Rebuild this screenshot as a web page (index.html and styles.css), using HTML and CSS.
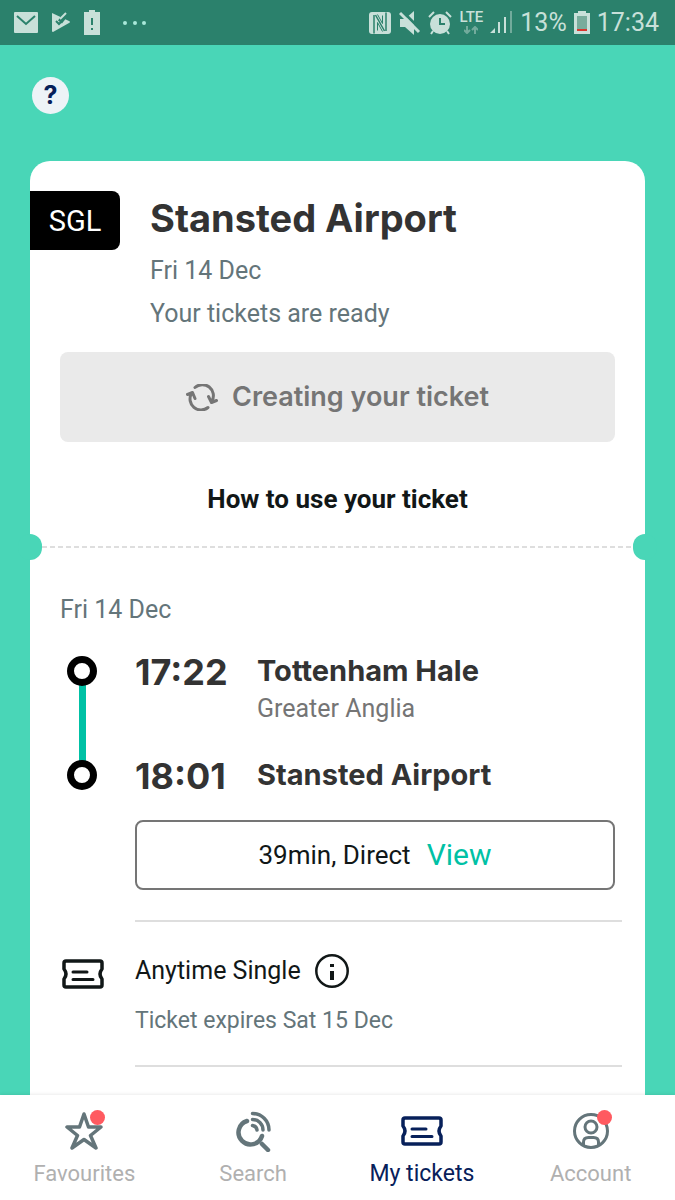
FILE: index.html
```html
<!doctype html>
<html lang="en">
<head>
	<meta charset="UTF-8">
	<meta name="viewport" content="width=device-width, initial-scale=1">
	<title>My tickets</title>
	<link rel="stylesheet" href="styles.css">
</head>
<body>
	<header class="status">
		<div class="status-left">
			<svg width="24" height="21" viewBox="0 0 24 21"><rect width="24" height="21" rx="1" fill="#c8e0d9"/><path d="M3 4l9 8 9-8" fill="none" stroke="#2b816c" stroke-width="2"/></svg>
			<svg width="20" height="21" viewBox="0 0 20 21"><path d="M1 1l17 8q2 1 0 2L2 20q-1 0-1-1z" fill="#c8e0d9"/><path d="M9 10l6-8" fill="none" stroke="#2b816c" stroke-width="5"/><path d="M5 9l3 3 5-5" fill="none" stroke="#2b816c" stroke-width="2"/><path d="M9 7l6-6" fill="none" stroke="#c8e0d9" stroke-width="2"/></svg>
			<svg width="16" height="25" viewBox="0 0 16 25"><path d="M0 2h5V0h6v2h5v23H0z" fill="#c8e0d9"/><path d="M8 8v7M8 18v2" stroke="#2b816c" stroke-width="2"/></svg>
			<svg class="more" width="24" height="4" viewBox="0 0 24 4" fill="#a9e8da"><circle cx="2" cy="2" r="2"/><circle cx="12" cy="2" r="2"/><circle cx="21" cy="2" r="2"/></svg>
		</div>
		<div class="status-right">
			<svg width="24" height="24" viewBox="0 0 24 24"><rect x="1" y="1" width="22" height="22" rx="3" fill="#c8e0d9"/><path d="M6 22.500V4M18 1.500V20M7.500 4l9 16" fill="none" stroke="#2b816c" stroke-width="1.500"/><path d="M9.500 19.500v-8l5 9M14.500 4.500v8l-5-9" fill="none" stroke="#2b816c" stroke-width="1"/></svg>
			<svg width="22" height="24" viewBox="0 0 22 24"><path d="M1 8h5l9-8v24l-9-8H1z" fill="#c8e0d9"/><path d="M3 0l19 19" stroke="#2b816c" stroke-width="3"/><path d="M1 2l19 19" stroke="#c8e0d9" stroke-width="3"/></svg>
			<svg width="24" height="24" viewBox="0 0 24 24"><circle cx="12" cy="13" r="10" fill="#c8e0d9"/><path d="M1 6l5-5M23 6l-5-5M5 20l-2 3M19 20l2 3" stroke="#c8e0d9" stroke-width="2"/><path d="M12 7v6h5" fill="none" stroke="#2b816c" stroke-width="2"/></svg>
			<div class="lte">LTE
				<svg width="14" height="8" viewBox="0 0 14 8" fill="none" stroke="#72ab9c" stroke-width="2"><path d="M3 0v7M0 4l3 3 3-3M11 8V1M8 4l3-3 3 3"/></svg>
			</div>
			<svg width="23" height="23" viewBox="0 0 23 23"><path d="M0 22h5v-5zM8 11h2v11H8zM14 6h2v16h-2z" fill="#c8e0d9"/><path d="M20 0h2v22h-2z" fill="#72ab9c"/></svg>
			<span>13%</span>
			<svg width="16" height="23" viewBox="0 0 16 23"><path d="M0 2h4V0h8v2h4v21H0z" fill="#c8e0d9"/><path d="M3 5h10v13H3z" fill="#78ac9c"/><path d="M3 18h10v2H3z" fill="#d8362e"/></svg>
			<span>17:34</span>
		</div>
	</header>

	<main>
		<button class="help" type="button" aria-label="Help">?</button>

		<article class="ticket">
			<section class="summary">
				<div class="summary-top">
					<span class="type">SGL</span>
					<div>
						<h1>Stansted Airport</h1>
						<p class="muted">Fri 14 Dec</p>
						<p class="muted">Your tickets are ready</p>
					</div>
				</div>
				<button class="creating" type="button">
					<svg width="32" height="27" viewBox="0 0 32 27" fill="none" stroke="#757575" stroke-width="3" stroke-linecap="round" stroke-linejoin="round"><path d="M9 3.500a11 11 0 0 1 17 13.500M22.500 12.500l3 6 5-2M22 23.500A11 11 0 0 1 5.500 9.500M1.500 10.500l5-2 2.500 6"/></svg>
					Creating your ticket
				</button>
				<a class="how" href="#">How to use your ticket</a>
			</section>
			<div class="tear"></div>

			<section class="journey">
				<p class="muted">Fri 14 Dec</p>
				<div class="stops">
					<div class="track"></div>
					<div class="stop">
						<time>17:22</time>
						<div>
							<h2>Tottenham Hale</h2>
							<p class="operator">Greater Anglia</p>
						</div>
					</div>
					<div class="stop">
						<time>18:01</time>
						<h2>Stansted Airport</h2>
					</div>
				</div>
				<button class="view" type="button">39min, Direct <span>View</span></button>
				<div class="fare">
					<svg class="fare-icon" width="42" height="30" viewBox="0 0 42 30" fill="none" stroke="#111717" stroke-width="3.500" stroke-linejoin="round" stroke-linecap="round"><path d="M4 2h34q2 0 2 2v6q-4 5 0 10v6q0 2-2 2H4q-2 0-2-2v-6q4-5 0-10V4q0-2 2-2z"/><path d="M11 13h14M11 20.500h20" stroke-width="3"/></svg>
					<div class="fare-text">
						<p class="fare-name">Anytime Single
							<button class="info" type="button" aria-label="Ticket information">
								<svg width="34" height="34" viewBox="0 0 34 34"><circle cx="17" cy="17" r="15.700" fill="none" stroke="#111717" stroke-width="2.500"/><path d="M15 17h4v9h-4zM15 10h4v3h-4z" fill="#111717"/></svg>
							</button>
						</p>
						<p class="muted">Ticket expires Sat 15 Dec</p>
					</div>
				</div>
			</section>
		</article>
	</main>

	<nav class="tabs">
		<a href="#">
			<span class="tab-icon dot">
				<svg width="38" height="38" viewBox="0 0 38 38" fill="none" stroke="#64757a" stroke-width="3.500" stroke-linejoin="round"><path d="M19 2l4.500 13H36l-10.500 8.500L31 36l-12-8.500L7 36l5.500-12.500L2 15h12.500z"/></svg>
			</span>
			Favourites
		</a>
		<a href="#">
			<span class="tab-icon">
				<svg width="38" height="42" viewBox="0 0 38 42" fill="none" stroke="#64757a" stroke-linecap="round"><path d="M13 11A12 12 0 1 0 28 26" stroke-width="4.500"/><path d="M28 34l6 6" stroke-width="4.500"/><path d="M18.500 3.500A16.500 16.500 0 0 1 35 20M18.500 9.500A10.500 10.500 0 0 1 29 20M18.500 15.500q4 .5 4.500 4.500" stroke-width="3.500"/></svg>
			</span>
			Search
		</a>
		<a class="active" href="#">
			<span class="tab-icon">
				<svg width="42" height="30" viewBox="0 0 42 30" fill="none" stroke="#07205a" stroke-width="3.500" stroke-linejoin="round" stroke-linecap="round"><path d="M4 2h34q2 0 2 2v6q-4 5 0 10v6q0 2-2 2H4q-2 0-2-2v-6q4-5 0-10V4q0-2 2-2z"/><path d="M11 13h14M11 20.500h20" stroke-width="3"/></svg>
			</span>
			My tickets
		</a>
		<a href="#">
			<span class="tab-icon dot">
				<svg width="36" height="36" viewBox="0 0 36 36" fill="none" stroke="#64757a" stroke-width="3"><circle cx="18" cy="18" r="16.500"/><circle cx="18" cy="14" r="6"/><path d="M10.500 32v-3q0-4.500 5-4.500h5q5 0 5 4.500v3"/></svg>
			</span>
			Account
		</a>
	</nav>
</body>
</html>
```
FILE: styles.css
```css
*, *::before, *::after {
	box-sizing: border-box;
	margin: 0;
	padding: 0;
}
body {
	display: flex;
	flex-direction: column;
	min-height: 100vh;
	background-color: #49d6b7;
	font-family: Roboto, sans-serif;
	font-size: 25px;
	line-height: 32px;
	color: #111717;
}
button {
	border: 0;
	background: none;
	font: inherit;
	color: inherit;
	cursor: pointer;
}
a {
	color: inherit;
	text-decoration: none;
}
svg {
	display: block;
	flex: none;
}
h1, h2, time, .creating, .help {
	font-family: Inter, sans-serif;
	font-weight: 700;
}

/* status bar */
.status {
	display: flex;
	justify-content: space-between;
	align-items: center;
	height: 45px;
	padding: 0 16px 0 14px;
	background-color: #2b816c;
	color: #c8e0d9;
}
.status-left {
	display: flex;
	align-items: center;
	gap: 13px;
}
.more {
	margin-left: 10px;
}
.status-right {
	display: flex;
	align-items: center;
	gap: 7px;
}
.lte {
	display: flex;
	flex-direction: column;
	align-items: center;
	gap: 3px;
	font-size: 15px;
	font-weight: 500;
	line-height: 12px;
}

main {
	display: flex;
	flex-direction: column;
	flex: 1;
	padding: 32px 30px 0;
}
.help {
	width: 37px;
	height: 37px;
	margin-left: 2px;
	border-radius: 50%;
	background-color: #edf3f7;
	color: #07205a;
	line-height: 37px;
}

/* ticket */
.ticket {
	flex: 1;
	margin-top: 47px;
	padding-bottom: 20px;
	border-radius: 20px 20px 0 0;
	background-color: #fff;
}
.muted {
	color: #64757a;
}
.summary {
	padding: 30px 30px 31px 0;
}
.summary-top {
	display: flex;
	gap: 30px;
}
.type {
	width: 90px;
	height: 59px;
	border-radius: 0 8px 8px 0;
	background-color: #000;
	color: #fff;
	font-size: 29px;
	line-height: 61px;
	text-align: center;
}
h1 {
	font-size: 38px;
	line-height: 54px;
	color: #333;
}
.summary .muted {
	margin-top: 9px;
	line-height: 34px;
}
.creating {
	display: flex;
	justify-content: center;
	align-items: center;
	gap: 14px;
	width: calc(100% - 30px);
	height: 90px;
	margin: 21px 0 0 30px;
	border-radius: 8px;
	background-color: #eaeaea;
	color: #757575;
	font-size: 27px;
	font-weight: 600;
}
.how {
	display: block;
	margin: 41px 0 0 30px;
	font-size: 26px;
	font-weight: 700;
	text-align: center;
}
.tear {
	position: relative;
	margin: 0 12px;
	height: 2px;
	background: repeating-linear-gradient(90deg, #dedede 0 5px, #fff 5px 8px);
}
.tear::before,
.tear::after {
	content: "";
	position: absolute;
	top: -12px;
	width: 24px;
	height: 26px;
	border-radius: 12px;
	background-color: #49d6b7;
}
.tear::before {
	left: -24px;
}
.tear::after {
	right: -24px;
}

/* journey */
.journey {
	padding: 46px 30px 0;
}
.stops {
	position: relative;
	display: grid;
	gap: 32px;
	margin-top: 27px;
	padding-left: 75px;
}
.track {
	position: absolute;
	top: 18px;
	bottom: 18px;
	left: 19px;
	width: 7px;
	background-color: #00c1a5;
}
.stop {
	position: relative;
	display: flex;
}
.stop::before {
	content: "";
	position: absolute;
	top: 3px;
	left: -68px;
	width: 30px;
	height: 30px;
	border: 7px solid #000;
	border-radius: 50%;
	background-color: #fff;
}
time {
	width: 122px;
	font-size: 36px;
	line-height: 38px;
	color: #333;
}
h2 {
	font-size: 29px;
	line-height: 36px;
	color: #333;
}
.operator {
	margin-top: 4px;
	color: #757575;
}
.view {
	display: flex;
	justify-content: center;
	align-items: center;
	gap: 16px;
	width: calc(100% - 75px);
	height: 70px;
	margin: 25px 0 0 75px;
	border: 2px solid #757575;
	border-radius: 8px;
	font-size: 26px;
}
.view span {
	color: #00c1a5;
	font-size: 30px;
}
.fare {
	display: flex;
	margin-top: 30px;
}
.fare-icon {
	margin: 39px 31px 0 2px;
}
.fare-text {
	flex: 1;
	margin-right: -7px;
	padding: 31px 0 28px;
	border-top: 2px solid #dedede;
	border-bottom: 2px solid #dedede;
}
.fare-name {
	display: flex;
	align-items: center;
	gap: 14px;
	height: 36px;
}
.fare-text .muted {
	margin-top: 16px;
	font-size: 23px;
}

/* bottom tabs */
.tabs {
	position: sticky;
	bottom: 0;
	display: grid;
	grid-template-columns: repeat(4, 1fr);
	height: 105px;
	background-color: #fff;
	box-shadow: 0 -1px 3px rgba(0, 0, 0, 0.08);
	color: #b0b0b0;
	font-size: 22px;
}
.tabs a {
	display: flex;
	flex-direction: column;
	align-items: center;
	padding-top: 15px;
}
.tabs .active {
	color: #07205a;
	font-size: 23px;
}
.tab-icon {
	position: relative;
	display: flex;
	justify-content: center;
	align-items: center;
	width: 42px;
	height: 42px;
	margin-bottom: 6px;
}
.dot::after {
	content: "";
	position: absolute;
	top: 0;
	right: 0;
	width: 15px;
	height: 15px;
	border-radius: 50%;
	background-color: #ff5a60;
}
```
